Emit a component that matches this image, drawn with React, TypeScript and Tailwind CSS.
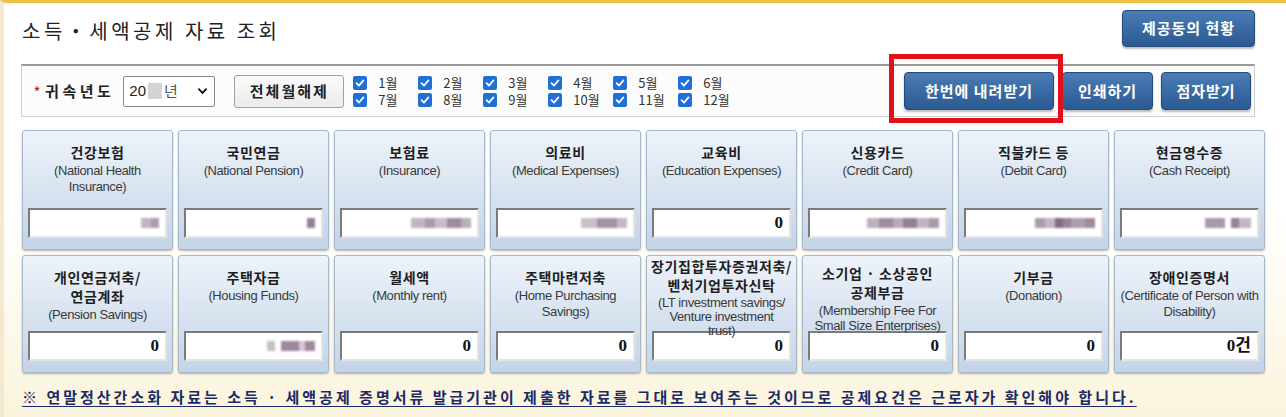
import React from 'react'

const kr = { fontFamily: '"Noto Sans CJK KR", "Liberation Sans", sans-serif' }
const en = { fontFamily: '"Liberation Sans", "Noto Sans CJK KR", sans-serif' }
const serif = { fontFamily: '"Liberation Serif", "Noto Sans CJK KR", serif' }

type Blur = [number, string][]

interface Item {
  title: string[]
  sub: string[]
  value?: string
  blur?: Blur
  pt?: string
  subLead?: string
}

const row1: Item[] = [
  { title: ['건강보험'], sub: ['(National Health', 'Insurance)'], blur: [[10, '#c2b4c1'], [8, '#ad9aab']] },
  { title: ['국민연금'], sub: ['(National Pension)'], blur: [[8, '#957e96']] },
  { title: ['보험료'], sub: ['(Insurance)'], blur: [[14, '#c2b5c1'], [10, '#ad99ab'], [12, '#c9bcc7'], [14, '#a08a9f'], [10, '#bcadba']] },
  { title: ['의료비'], sub: ['(Medical Expenses)'], blur: [[16, '#cbbfc9'], [20, '#a691a6'], [10, '#c4b7c3']] },
  { title: ['교육비'], sub: ['(Education Expenses)'], value: '0' },
  { title: ['신용카드'], sub: ['(Credit Card)'], blur: [[12, '#bfb0bd'], [14, '#a08ba0'], [10, '#b9a9b7'], [14, '#957e95'], [12, '#c2b4c0'], [10, '#ab99aa']] },
  { title: ['직불카드 등'], sub: ['(Debit Card)'], blur: [[10, '#ae9cad'], [10, '#c3b5c1'], [8, '#856b86'], [8, '#9a849a'], [14, '#af9dad'], [10, '#9e899d']] },
  { title: ['현금영수증'], sub: ['(Cash Receipt)'], blur: [[20, '#ab98aa'], [6, '#ffffff'], [8, '#977f97'], [12, '#c3b5c1']] },
]

const row2: Item[] = [
  { title: ['개인연금저축/', '연금계좌'], sub: ['(Pension Savings)'], value: '0' },
  { title: ['주택자금'], sub: ['(Housing Funds)'], blur: [[8, '#c9bdc8'], [6, '#ffffff'], [18, '#9d879d'], [6, '#d3c9d2'], [10, '#a08aa0']] },
  { title: ['월세액'], sub: ['(Monthly rent)'], value: '0' },
  { title: ['주택마련저축'], sub: ['(Home Purchasing', 'Savings)'], value: '0' },
  { title: ['장기집합투자증권저축/', '벤처기업투자신탁'], sub: ['(LT investment savings/', 'Venture investment', 'trust)'], value: '0', pt: 'pt-[1px]', subLead: 'leading-[14px]' },
  { title: ['소기업 · 소상공인', '공제부금'], sub: ['(Membership Fee For', 'Small Size Enterprises)'], value: '0', pt: 'pt-[8px]', subLead: 'leading-[15px]' },
  { title: ['기부금'], sub: ['(Donation)'], value: '0' },
  { title: ['장애인증명서'], sub: ['(Certificate of Person with', 'Disability)'], value: '0건' },
]

function CheckBox() {
  return (
    <span className="inline-flex h-[14px] w-[14px] items-center justify-center rounded-[2px] bg-[#1f6fd6]">
      <svg viewBox="0 0 14 14" className="h-[12px] w-[12px]">
        <path d="M3 7.2 L5.8 10 L11 4" fill="none" stroke="#fff" strokeWidth="2" strokeLinecap="round" strokeLinejoin="round" />
      </svg>
    </span>
  )
}

function BlueButton({ children, className }: { children: React.ReactNode; className?: string }) {
  return (
    <button
      className={`rounded-[4px] border border-[#24497a] bg-gradient-to-b from-[#4a7cb6] to-[#2c5a92] text-[15px] font-bold tracking-[1px] text-white shadow-[0_2px_2px_rgba(0,0,0,0.25)] ${className ?? ''}`}
      style={kr}
    >
      {children}
    </button>
  )
}

function Card({ item, h }: { item: Item; h: string }) {
  return (
    <div
      className={`flex ${h} flex-col rounded-[3px] border border-[#a7b8cc] bg-gradient-to-b from-[#eef3fa] to-[#c3d4e7] shadow-[0_1px_2px_rgba(0,0,0,0.3)]`}
    >
      <div className={`relative z-10 flex min-h-0 flex-1 flex-col items-center overflow-visible text-center ${item.pt ?? 'pt-[12px]'}`}>
        {item.title.map((t) => (
          <div key={t} className="whitespace-nowrap text-[14px] font-bold leading-[19px] tracking-[0.6px] text-[#1e1e1e]" style={kr}>
            {t}
          </div>
        ))}
        <div className="mt-[1px]">
          {item.sub.map((s) => (
            <div key={s} className={`whitespace-nowrap text-[13px] tracking-[-0.4px] text-[#3a3a3a] ${item.subLead ?? 'leading-[16px]'}`} style={en}>
              {s}
            </div>
          ))}
        </div>
      </div>
      <div className="mx-[5px] mb-[11px] flex h-[30px] shrink-0 items-center justify-end border-2 border-b-[#e4e4e4] border-l-[#7a7a7a] border-r-[#e4e4e4] border-t-[#7a7a7a] bg-white pr-[6px]">
        {item.value !== undefined ? (
          <span className="text-[17px] font-bold text-[#111]" style={serif}>
            {item.value}
          </span>
        ) : (
          <span className="flex h-[12px] items-center blur-[1px]">
            {item.blur?.map(([w, c], i) => (
              <span key={i} className="h-[10px]" style={{ width: w, background: c }} />
            ))}
          </span>
        )}
      </div>
    </div>
  )
}

export default function App() {
  const cols = [
    ['1월', '7월'],
    ['2월', '8월'],
    ['3월', '9월'],
    ['4월', '10월'],
    ['5월', '11월'],
    ['6월', '12월'],
  ]

  return (
    <div className="relative h-[417px] w-[1286px] overflow-hidden border-l-[4px] border-t-[3px] border-l-[#f4e8cf] border-t-[#efc349] bg-gradient-to-b from-white via-white to-[#fbf4dc] pl-[18px] pr-[21px]" style={kr}>
      {/* header */}
      <div className="flex h-[61px] items-start justify-between pr-[10px]">
        <h1 className="mt-[13px] text-[20px] tracking-[3.5px] text-[#222]">소득・세액공제 자료 조회</h1>
        <BlueButton className="mt-[7px] h-[37px] w-[133px]">제공동의 현황</BlueButton>
      </div>

      {/* filter bar */}
      <div className="relative ml-[-1px] mr-[10px] flex h-[53px] items-center border border-t-2 border-[#d0d0d0] border-t-[#9a9a9a] bg-[#fcfcfc] pl-[12px]">
        <span className="mr-[5px] text-[12px] font-bold text-[#c0262b]">*</span>
        <span className="text-[15px] font-bold tracking-[3.5px] text-[#222]">귀속년도</span>
        <div className="ml-[9px] flex h-[31px] w-[92px] items-center rounded-[2px] border border-[#8a8a8a] bg-white pl-[5px] pr-[6px] text-[15px] text-[#222]">
          <span style={en}>20</span>
          <span className="mx-[2px] h-[16px] w-[14px] bg-[#d4d4d4] blur-[0.5px]" />
          <span className="text-[#555]">년</span>
          <svg viewBox="0 0 12 8" className="ml-auto h-[8px] w-[11px]">
            <path d="M1.5 1.5 L6 6 L10.5 1.5" fill="none" stroke="#111" strokeWidth="2" />
          </svg>
        </div>
        <button className="ml-[19px] h-[33px] w-[110px] rounded-[3px] border border-[#a0a0a0] bg-gradient-to-b from-[#fafafa] to-[#ececec] text-[15px] font-bold tracking-[2px] text-[#222]">
          전체월해제
        </button>
        <div className="ml-[9px] flex">
          {cols.map((c) => (
            <div key={c[0]} className="flex w-[65px] flex-col gap-[3px]">
              {c.map((m) => (
                <div key={m} className="flex h-[14px] items-center">
                  <CheckBox />
                  <span className="ml-[11px] text-[13px] leading-[14px] text-[#333]">{m}</span>
                </div>
              ))}
            </div>
          ))}
        </div>
        <div className="ml-auto mr-[3px] flex gap-[8px]">
          <BlueButton className="h-[38px] w-[150px]">한번에 내려받기</BlueButton>
          <BlueButton className="h-[38px] w-[91px]">인쇄하기</BlueButton>
          <BlueButton className="h-[38px] w-[90px]">점자받기</BlueButton>
        </div>
        <div className="pointer-events-none absolute left-[867px] top-[-12px] h-[69px] w-[174px] border-[5px] border-[#e3101a]" />
      </div>

      {/* cards */}
      <div className="mt-[13px] grid grid-cols-8 gap-[5px]">
        {row1.map((it) => (
          <Card key={it.title[0]} item={it} h="h-[120px]" />
        ))}
        {row2.map((it) => (
          <Card key={it.title[0]} item={it} h="h-[118px]" />
        ))}
      </div>

      {/* notice */}
      <p className="mt-[13px] whitespace-nowrap text-[15px] font-bold tracking-[3px] text-[#1b2a66] underline underline-offset-[3px]">
        ※ 연말정산간소화 자료는 소득 · 세액공제 증명서류 발급기관이 제출한 자료를 그대로 보여주는 것이므로 공제요건은 근로자가 확인해야 합니다.
      </p>
    </div>
  )
}
